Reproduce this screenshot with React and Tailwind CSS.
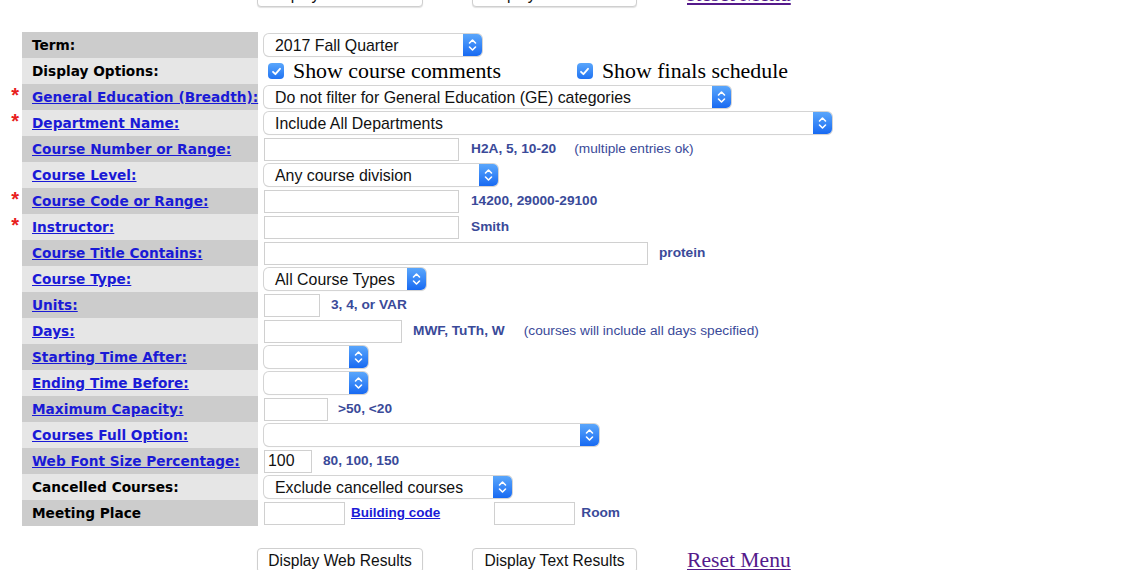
import React from 'react';

const sans = { fontFamily: '"Liberation Sans", Arial, sans-serif' };
const verdana = { fontFamily: '"DejaVu Sans", Verdana, sans-serif' };
const serif = { fontFamily: '"Liberation Serif", "Times New Roman", serif' };

const MacSelect = ({ width, text }) => (
  <div
    className="relative h-[22px] rounded-[5px] bg-white flex items-center shadow-[0_0_0_1px_#d4d4d4,0_1px_1px_rgba(0,0,0,0.15)]"
    style={{ width }}
  >
    <span className="pl-[11px] pt-[1px] text-[15.9px] text-[#111] whitespace-nowrap" style={sans}>
      {text}
    </span>
    <div className="absolute right-0 top-0 h-[22px] w-[19px] rounded-r-[5px] bg-gradient-to-b from-[#5aa6fb] to-[#1769f2] flex items-center justify-center">
      <svg width="9" height="14" viewBox="0 0 9 14" fill="none" stroke="white" strokeWidth="1.6" strokeLinecap="round" strokeLinejoin="round">
        <path d="M1.5 5 L4.5 2 L7.5 5" />
        <path d="M1.5 9 L4.5 12 L7.5 9" />
      </svg>
    </div>
  </div>
);

const TextBox = ({ width, value }) => (
  <div
    className="h-[23px] bg-white border border-[#d0d0d0] flex items-center pl-[3px] text-[15.9px] text-[#111]"
    style={{ width, ...sans }}
  >
    {value}
  </div>
);

const Hint = ({ children, className = '' }) => (
  <span className={`text-[13.7px] font-bold text-[#3a4a99] whitespace-nowrap ${className}`} style={sans}>
    {children}
  </span>
);

const Note = ({ children, className = '' }) => (
  <span className={`text-[13.7px] text-[#3a4a99] whitespace-nowrap ${className}`} style={sans}>
    {children}
  </span>
);

const Check = ({ label }) => (
  <div className="flex items-center">
    <div className="w-[16px] h-[16px] rounded-[4px] bg-gradient-to-b from-[#5aa6fb] to-[#1f72f2] flex items-center justify-center">
      <svg width="11" height="11" viewBox="0 0 11 11" fill="none" stroke="white" strokeWidth="1.8" strokeLinecap="round" strokeLinejoin="round">
        <path d="M2 5.8 L4.4 8.2 L9 2.8" />
      </svg>
    </div>
    <span className="ml-[9px] text-[21.9px] leading-[24px] text-black" style={serif}>
      {label}
    </span>
  </div>
);

const rows = [
  { label: 'Term:', link: false, field: <MacSelect width={218} text="2017 Fall Quarter" /> },
  {
    label: 'Display Options:',
    link: false,
    field: (
      <div className="flex items-center pl-[4px]">
        <Check label="Show course comments" />
        <div className="ml-[76px]"><Check label="Show finals schedule" /></div>
      </div>
    ),
  },
  { label: 'General Education (Breadth):', req: true, field: <MacSelect width={467} text="Do not filter for General Education (GE) categories" /> },
  { label: 'Department Name:', req: true, field: <MacSelect width={568} text="Include All Departments" /> },
  {
    label: 'Course Number or Range:',
    field: (
      <div className="flex items-center">
        <TextBox width={195} />
        <Hint className="ml-[12px]">H2A, 5, 10-20</Hint>
        <Note className="ml-[18px]">(multiple entries ok)</Note>
      </div>
    ),
  },
  { label: 'Course Level:', field: <MacSelect width={234} text="Any course division" /> },
  {
    label: 'Course Code or Range:',
    req: true,
    field: (
      <div className="flex items-center">
        <TextBox width={195} />
        <Hint className="ml-[12px]">14200, 29000-29100</Hint>
      </div>
    ),
  },
  {
    label: 'Instructor:',
    req: true,
    field: (
      <div className="flex items-center">
        <TextBox width={195} />
        <Hint className="ml-[12px]">Smith</Hint>
      </div>
    ),
  },
  {
    label: 'Course Title Contains:',
    field: (
      <div className="flex items-center">
        <TextBox width={384} />
        <Hint className="ml-[11px]">protein</Hint>
      </div>
    ),
  },
  { label: 'Course Type:', field: <MacSelect width={162} text="All Course Types" /> },
  {
    label: 'Units:',
    field: (
      <div className="flex items-center">
        <TextBox width={56} />
        <Hint className="ml-[11px]">3, 4, or VAR</Hint>
      </div>
    ),
  },
  {
    label: 'Days:',
    field: (
      <div className="flex items-center">
        <TextBox width={138} />
        <Hint className="ml-[11px]">MWF, TuTh, W</Hint>
        <Note className="ml-[19px]">(courses will include all days specified)</Note>
      </div>
    ),
  },
  { label: 'Starting Time After:', field: <MacSelect width={104} text="" /> },
  { label: 'Ending Time Before:', field: <MacSelect width={104} text="" /> },
  {
    label: 'Maximum Capacity:',
    field: (
      <div className="flex items-center">
        <TextBox width={64} />
        <Hint className="ml-[10px]">&gt;50, &lt;20</Hint>
      </div>
    ),
  },
  { label: 'Courses Full Option:', field: <MacSelect width={335} text="" /> },
  {
    label: 'Web Font Size Percentage:',
    field: (
      <div className="flex items-center">
        <TextBox width={48} value="100" />
        <Hint className="ml-[11px]">80, 100, 150</Hint>
      </div>
    ),
  },
  { label: 'Cancelled Courses:', link: false, field: <MacSelect width={248} text="Exclude cancelled courses" /> },
  {
    label: 'Meeting Place',
    link: false,
    field: (
      <div className="flex items-center">
        <TextBox width={81} />
        <a href="#" className="ml-[6px] text-[13.5px] font-bold text-[#1a1ad6] underline" style={sans}>Building code</a>
        <div className="ml-[54px]"><TextBox width={81} /></div>
        <Hint className="ml-[6px]">Room</Hint>
      </div>
    ),
  },
];

const Buttons = () => (
  <div className="flex items-center h-[25px]">
    <button className="ml-[257px] w-[166px] h-[25px] bg-white border border-[#cfcfcf] rounded-[4px] text-[15.6px] text-[#111] shadow-[0_1px_1px_rgba(0,0,0,0.12)]" style={sans}>
      Display Web Results
    </button>
    <button className="ml-[49px] w-[165px] h-[25px] bg-white border border-[#cfcfcf] rounded-[4px] text-[15.6px] text-[#111] shadow-[0_1px_1px_rgba(0,0,0,0.12)]" style={sans}>
      Display Text Results
    </button>
    <a href="#" className="ml-[50px] text-[21.6px] text-[#551a8b] underline leading-none" style={serif}>
      Reset Menu
    </a>
  </div>
);

export default function App() {
  return (
    <div className="w-[1140px] h-[570px] bg-white overflow-hidden">
      <div className="-mt-[18px]">
        <Buttons />
      </div>
      <div className="mt-[25px]">
        {rows.map((row, i) => (
          <div key={row.label} className="flex h-[26px]">
            <div className="w-[22px] flex justify-end pr-[3px] pt-[1px]">
              {row.req && (
                <span className="text-[20px] leading-[20px] text-[#e8201c] font-bold" style={sans}>*</span>
              )}
            </div>
            <div className={`w-[236px] flex items-center pl-[10px] ${i % 2 === 0 ? 'bg-[#cccccc]' : 'bg-[#e6e6e6]'}`}>
              {row.link === false ? (
                <span className="text-[13.7px] font-bold text-black whitespace-nowrap" style={verdana}>
                  {row.label}
                </span>
              ) : (
                <a href="#" className="text-[13.7px] font-bold text-[#1a1ad6] underline whitespace-nowrap" style={verdana}>
                  {row.label}
                </a>
              )}
            </div>
            <div className="flex-1 flex items-center pl-[6px]">{row.field}</div>
          </div>
        ))}
      </div>
      <div className="mt-[22px]">
        <Buttons />
      </div>
    </div>
  );
}
